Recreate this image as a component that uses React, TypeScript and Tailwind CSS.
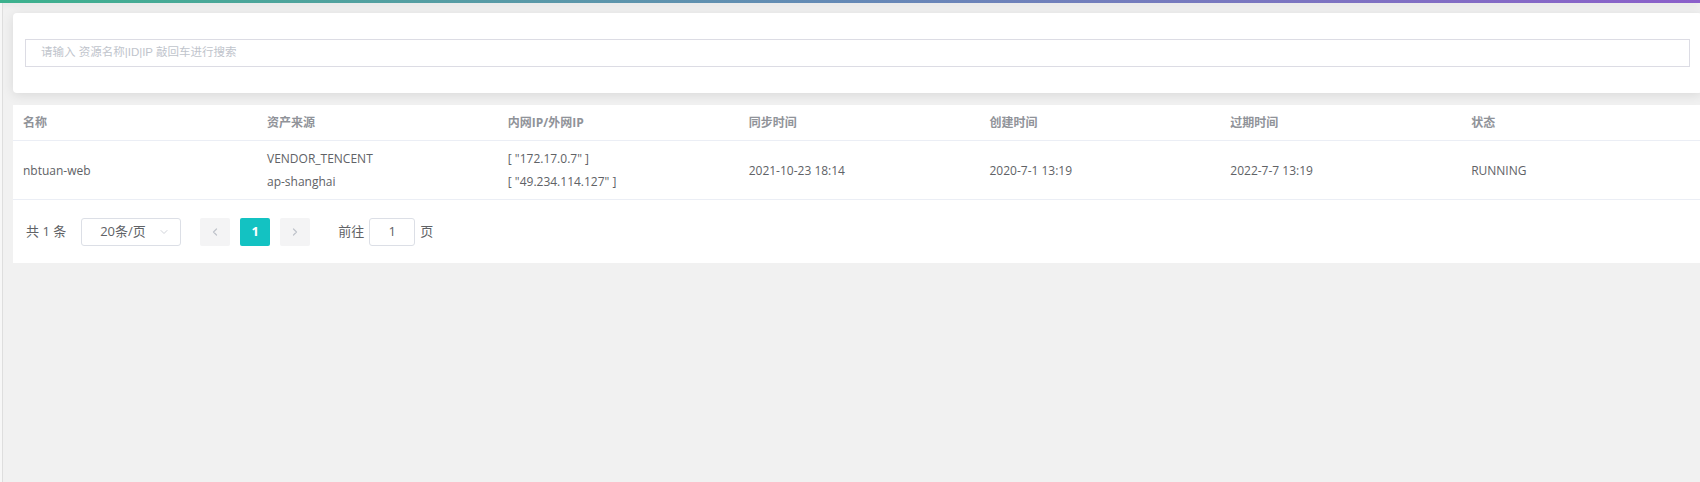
import React from "react";
import { ChevronDown, ChevronLeft, ChevronRight } from "lucide-react";

const columns = ["名称", "资产来源", "内网IP/外网IP", "同步时间", "创建时间", "过期时间", "状态"];

const rows = [
    {
        name: "nbtuan-web",
        vendor: "VENDOR_TENCENT",
        region: "ap-shanghai",
        privateIp: '[ "172.17.0.7" ]',
        publicIp: '[ "49.234.114.127" ]',
        syncedAt: "2021-10-23 18:14",
        createdAt: "2020-7-1 13:19",
        expiredAt: "2022-7-7 13:19",
        status: "RUNNING",
    },
];

function Pagination() {
    return (
        <div className="flex items-center pl-[13px] pt-[18px] pb-[17px] text-[13px] text-[#606266]">
            <span className="mr-[15px]">共 1 条</span>
            <div className="flex items-center w-[100px] h-[28px] border border-[#dcdfe6] rounded-[3px] pl-[18px] pr-[10px]">
                <span className="flex-1">20条/页</span>
                <ChevronDown size={12} strokeWidth={1.5} className="text-[#c0c4cc]" />
            </div>
            <button className="ml-[19px] w-[30px] h-[28px] bg-[#f4f4f5] rounded-[2px] flex items-center justify-center">
                <ChevronLeft size={12} strokeWidth={2.5} className="text-[#c0c4cc]" />
            </button>
            <button className="ml-[10px] w-[30px] h-[28px] bg-[#13c2c2] rounded-[2px] text-white font-bold">
                1
            </button>
            <button className="ml-[10px] w-[30px] h-[28px] bg-[#f4f4f5] rounded-[2px] flex items-center justify-center">
                <ChevronRight size={12} strokeWidth={2.5} className="text-[#c0c4cc]" />
            </button>
            <span className="ml-[28px]">前往</span>
            <div className="ml-[5px] w-[46px] h-[28px] border border-[#dcdfe6] rounded-[3px] flex items-center justify-center">
                1
            </div>
            <span className="ml-[5px]">页</span>
        </div>
    );
}

export default function App() {
    return (
        <div
            className="w-[1700px] h-[482px] overflow-hidden flex flex-col bg-[#f1f1f1]"
            style={{ fontFamily: '"Open Sans", "Noto Sans CJK SC", sans-serif' }}
        >
            <div className="h-[3px] shrink-0 bg-linear-to-r from-[#3bb18d] via-[#6589b6] to-[#8b5fca] shadow-[0_2px_6px_rgba(0,0,0,0.08)]" />
            <div className="flex flex-1 min-h-0">
                <div className="w-[2px] bg-[#f7f7f7]" />
                <div className="w-px bg-[#dedede]" />
                <div className="flex-1 min-w-0 pl-[10px] pt-[10px]">
                    <div className="w-[1689px] h-[80px] bg-white rounded-[4px] shadow-[0_2px_12px_rgba(0,0,0,0.1)] px-[12px] py-[26px]">
                        <div className="h-[28px] border border-[#dcdce4] flex items-center pl-[15px] text-[11.5px] text-[#c0c4cc] font-['Liberation_Sans','Noto_Sans_CJK_SC',sans-serif]">
                            请输入 资源名称|ID|IP 敲回车进行搜索
                        </div>
                    </div>

                    <div className="w-[1689px] mt-[12px] bg-white">
                        <table className="w-full table-fixed border-collapse text-[12px]">
                            <colgroup>
                                <col className="w-[244px]" />
                                <col />
                                <col />
                                <col />
                                <col />
                                <col />
                                <col />
                            </colgroup>
                            <thead>
                                <tr>
                                    {columns.map((col) => (
                                        <th
                                            key={col}
                                            className="px-[10px] py-[6px] leading-[23px] text-left font-bold text-[#909399] border-b border-[#ebeef5]"
                                        >
                                            {col}
                                        </th>
                                    ))}
                                </tr>
                            </thead>
                            <tbody className="text-[#606266]">
                                {rows.map((r) => (
                                    <tr key={r.name} className="border-b border-[#ebeef5]">
                                        <td className="px-[10px] py-[6px] leading-[23px]">{r.name}</td>
                                        <td className="px-[10px] py-[6px] leading-[23px]">
                                            <div>{r.vendor}</div>
                                            <div>{r.region}</div>
                                        </td>
                                        <td className="px-[10px] py-[6px] leading-[23px]">
                                            <div>{r.privateIp}</div>
                                            <div>{r.publicIp}</div>
                                        </td>
                                        <td className="px-[10px] py-[6px] leading-[23px]">{r.syncedAt}</td>
                                        <td className="px-[10px] py-[6px] leading-[23px]">{r.createdAt}</td>
                                        <td className="px-[10px] py-[6px] leading-[23px]">{r.expiredAt}</td>
                                        <td className="px-[10px] py-[6px] leading-[23px]">{r.status}</td>
                                    </tr>
                                ))}
                            </tbody>
                        </table>
                        <Pagination />
                    </div>
                </div>
            </div>
        </div>
    );
}
